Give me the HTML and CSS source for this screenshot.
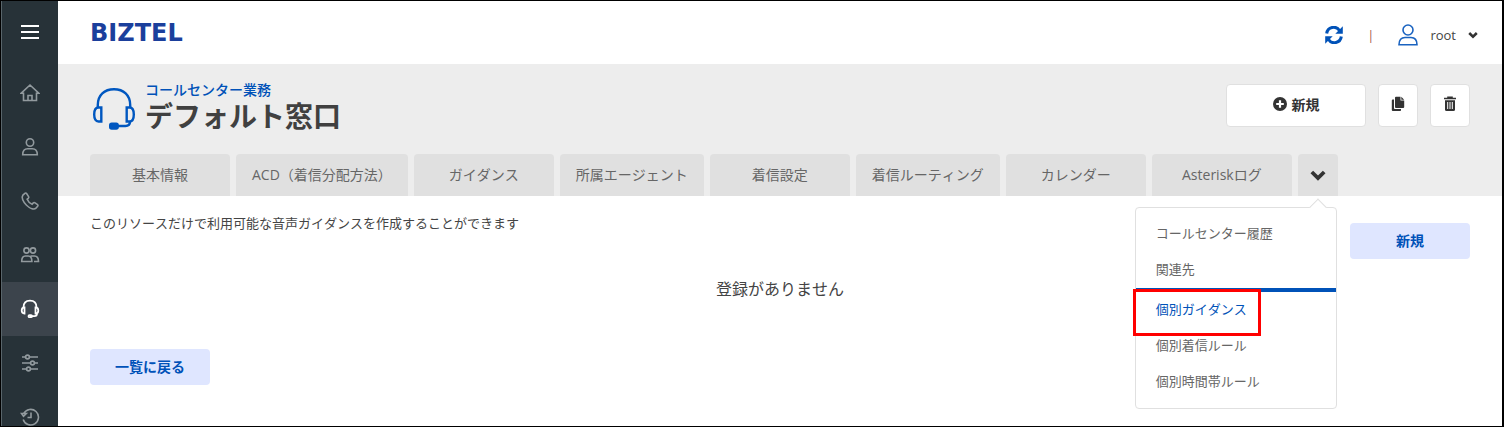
FILE: index.html
```html
<!DOCTYPE html>
<html lang="ja">
<head>
    <meta charset="UTF-8">
    <meta name="viewport" content="width=device-width, initial-scale=1.0">
    <title>BIZTEL コールセンター業務</title>
    <link rel="stylesheet" href="styles.css">
</head>
<body>
<div class="app">

    <!-- サイドバー -->
    <aside class="sidebar">
        <button class="menu-btn" type="button" aria-label="メニュー">
            <svg width="20" height="18" viewBox="0 0 20 18"><path d="M1 2h18M1 8h18M1 14h18" stroke="#fff" stroke-width="2" fill="none"/></svg>
        </button>
        <nav class="side-nav">
            <a href="#home" aria-label="ホーム">
                <svg class="icon" width="20" height="20" viewBox="0 0 20 20"><path d="M1 10.300L10 2l9 8.300h-2.500V17.500h-13v-7.200zM8 17.500v-5h4v5"/></svg>
            </a>
            <a href="#user" aria-label="ユーザー">
                <svg class="icon" width="20" height="20" viewBox="0 0 20 20"><circle cx="10" cy="5.500" r="3.700"/><path d="M2.700 17.700c0-4 1.800-6 5-6h4.600c3.200 0 5 2 5 6z"/></svg>
            </a>
            <a href="#phone" aria-label="電話">
                <svg class="icon" width="20" height="20" viewBox="0 0 20 20"><path d="M5.200 2.200L2.900 4.100C1 6.500 3.200 11 6.300 14c3.200 3.100 7.400 5 9.700 3.200l1.800-2.100c.4-.6.300-1-.2-1.400l-2.900-2c-.5-.3-1-.3-1.400.2l-1.200 1.300c-1.900-.7-4.200-3-5-4.900l1.300-1.200c.4-.4.5-.9.200-1.400L6.600 2.500c-.4-.5-.9-.6-1.400-.3z"/></svg>
            </a>
            <a href="#group" aria-label="グループ">
                <svg class="icon" width="20" height="20" viewBox="0 0 20 20"><circle cx="6.500" cy="5.500" r="2.600"/><circle cx="13" cy="5.500" r="2.600"/><path d="M1.700 16.500c0-3.600 1.300-5.500 3.700-5.500h2.800c2.400 0 3.700 1.900 3.700 5.500zM10.500 11h3.900c2.600 0 4.100 1.900 4.100 5.500h-4.500"/></svg>
            </a>
            <a href="#callcenter" class="active" aria-label="コールセンター">
                <svg class="icon" width="20" height="20" viewBox="0 0 20 20"><path d="M3.500 8.500C3.500 4 6.300 1.700 10 1.700s6.500 2.300 6.500 6.800M17 14.500c0 2-1 2.700-2.500 2.700H10"/><path d="M4.500 8.300v6.200c-2 0-2.800-1.200-2.800-3.100s.8-3.100 2.800-3.100zM15.500 8.300v6.200c2 0 2.800-1.200 2.800-3.100s-.8-3.100-2.800-3.100z"/><rect x="8.500" y="16.200" width="3.500" height="2" rx="1"/></svg>
            </a>
            <a href="#settings" aria-label="設定">
                <svg class="icon" width="20" height="20" viewBox="0 0 20 20"><path d="M2 4h3.500M9.500 4H18M2 10h8.500M14.500 10H18M2 16h4.500M10.500 16H18"/><circle cx="7.500" cy="4" r="1.900"/><circle cx="12.500" cy="10" r="1.900"/><circle cx="8.500" cy="16" r="1.900"/></svg>
            </a>
            <a href="#history" aria-label="履歴">
                <svg class="icon" width="20" height="20" viewBox="0 0 20 20"><path d="M3.800 6.500a7.800 7.800 0 1 1-.6 6M11 5.500v5H7.500"/><path d="M1.500 6.500h4.800L3.500 9.300z"/></svg>
            </a>
        </nav>
    </aside>

    <div class="main">
        <!-- ヘッダー -->
        <header class="topbar">
            <a href="#top" class="logo">BIZTEL</a>
            <div class="topbar-right">
                <button class="plain-btn" type="button" aria-label="更新">
                    <svg width="18" height="18" viewBox="0 0 18 18"><path d="M1.700 7.500A7 7 0 0 1 14.500 4.500M16.300 10.500A7 7 0 0 1 3.500 13.500" fill="none" stroke="#0052b8" stroke-width="3"/><path d="M17.800.3v7.500h-7.500zM.2 17.700v-7.500h7.500z" fill="#0052b8"/></svg>
                </button>
                <span class="separator">|</span>
                <button class="plain-btn user-btn" type="button">
                    <svg width="20" height="22" viewBox="0 0 20 22" fill="none" stroke="#1a63c0" stroke-width="1.600"><circle cx="10" cy="6" r="5"/><path d="M1 20.800c0-5 2.300-7.300 6-7.300h6c3.700 0 6 2.300 6 7.300z"/></svg>
                    <span>root</span>
                    <svg width="10" height="8" viewBox="0 0 10 8"><path d="M1.200 2L5 5.600 8.800 2" fill="none" stroke="#333" stroke-width="2.600"/></svg>
                </button>
            </div>
        </header>

        <!-- ページタイトルとタブ -->
        <section class="page-head">
            <div class="title-row">
                <svg class="title-icon" width="44" height="44" viewBox="0 0 44 44" fill="none" stroke="#0057c0" stroke-width="2.400"><path d="M5.800 20.500V18C5.800 8 12.500 2.200 22 2.200S38.200 8 38.200 18v2.500"/><path d="M9.300 20.500v14H6.500c-2.800 0-4.300-2.500-4.300-7s1.500-7 4.300-7zM34.700 20.500v14h2.800c2.800 0 4.300-2.500 4.300-7s-1.500-7-4.300-7z"/><path d="M38 34.500c0 3-1.500 4.500-4.500 4.500H24"/><rect x="18.200" y="36.700" width="7.500" height="4.800" rx="1.500" fill="#0057c0"/></svg>
                <div class="title-text">
                    <p class="category">コールセンター業務</p>
                    <h1>デフォルト窓口</h1>
                </div>
                <div class="actions">
                    <button class="action-btn wide" type="button">
                        <svg width="14" height="14" viewBox="0 0 14 14"><circle cx="7" cy="7" r="7" fill="#333"/><path d="M7 3.200v7.600M3.200 7h7.600" stroke="#fff" stroke-width="2.200"/></svg>
                        <span>新規</span>
                    </button>
                    <button class="action-btn" type="button" aria-label="コピー">
                        <svg width="14" height="16" viewBox="0 0 14 16" fill="#333"><path d="M5 .8h4.500v3.700h3.700V11a1 1 0 0 1-1 1H5a1 1 0 0 1-1-1V1.800a1 1 0 0 1 1-1zM10.300.8l2.900 2.900h-2.900zM1.800 3.500H3v8.700a.8.800 0 0 0 .8.800H10v1.200a.8.800 0 0 1-.8.800H1.800a1 1 0 0 1-1-1V4.500a1 1 0 0 1 1-1z"/></svg>
                    </button>
                    <button class="action-btn" type="button" aria-label="削除">
                        <svg width="14" height="16" viewBox="0 0 14 16"><path d="M1 2.500h12M5 2V1.200h4V2" fill="none" stroke="#333" stroke-width="1.600"/><path d="M2 4.200h10v9.300a1.500 1.500 0 0 1-1.500 1.500h-7A1.500 1.500 0 0 1 2 13.500z" fill="#333"/><path d="M4.700 6v7M7 6v7M9.300 6v7" stroke="#fff" stroke-width="1"/></svg>
                    </button>
                </div>
            </div>

            <nav class="tabs">
                <a href="#basic" class="tab">基本情報</a>
                <a href="#acd" class="tab">ACD（着信分配方法）</a>
                <a href="#guidance" class="tab">ガイダンス</a>
                <a href="#agents" class="tab">所属エージェント</a>
                <a href="#incoming" class="tab">着信設定</a>
                <a href="#routing" class="tab">着信ルーティング</a>
                <a href="#calendar" class="tab">カレンダー</a>
                <a href="#asterisk" class="tab">Asteriskログ</a>
                <div class="more">
                    <button class="more-btn" type="button" aria-label="その他">
                        <svg width="16" height="12" viewBox="0 0 16 12"><path d="M1.800 3L8 9l6.200-6" fill="none" stroke="#333" stroke-width="3.800"/></svg>
                    </button>
                    <!-- ドロップダウン -->
                    <div class="dropdown">
                        <a href="#cc-history">コールセンター履歴</a>
                        <a href="#related">関連先</a>
                        <a href="#own-guidance" class="current">個別ガイダンス</a>
                        <a href="#own-rule">個別着信ルール</a>
                        <a href="#own-time">個別時間帯ルール</a>
                    </div>
                </div>
            </nav>
        </section>

        <!-- コンテンツ -->
        <main class="content">
            <div class="content-top">
                <p class="description">このリソースだけで利用可能な音声ガイダンスを作成することができます</p>
                <button class="blue-btn" type="button">新規</button>
            </div>
            <p class="empty">登録がありません</p>
            <button class="blue-btn" type="button">一覧に戻る</button>
        </main>
    </div>
</div>
</body>
</html>
```
FILE: styles.css
```css
*,
*::before,
*::after {
    box-sizing: border-box;
}

body {
    margin: 0;
    font-family: "Open Sans", "Noto Sans CJK JP", sans-serif;
    font-size: 13px;
    font-kerning: none;
    line-height: 20px;
    color: #444;
    background-color: #fff;
}

p,
h1 {
    margin: 0;
}

a {
    text-decoration: none;
}

button {
    padding: 0;
    font-family: inherit;
    border: none;
    cursor: pointer;
}

svg {
    display: block;
    flex-shrink: 0;
}

/* 全体の枠 */
.app {
    display: flex;
    height: 100vh;
    border: 1px solid #000;
    border-width: 1px 2px 1px 1px;
    overflow: hidden;
}

/* サイドバー */
.sidebar {
    width: 57px;
    flex-shrink: 0;
    background-color: #273238;
    border-left: 1px solid #59656b;
}

.menu-btn {
    display: flex;
    justify-content: center;
    align-items: center;
    width: 100%;
    height: 65px;
    padding-bottom: 2px;
    background: none;
}

.side-nav a {
    display: flex;
    justify-content: center;
    align-items: center;
    height: 54px;
}

.side-nav .active {
    background-color: #3c444c;
}

.icon {
    fill: none;
    stroke: #929a9e;
    stroke-width: 1.6;
}

.active .icon {
    stroke: #fff;
    stroke-width: 1.8;
}

.main {
    flex: 1;
    min-width: 0;
}

/* ヘッダー */
.topbar {
    display: flex;
    justify-content: space-between;
    align-items: center;
    height: 63px;
    padding: 0 24px 0 32px;
}

.logo {
    font-family: "DejaVu Sans", sans-serif;
    font-size: 24px;
    font-weight: bold;
    color: #1b3f9c;
}

.topbar-right {
    display: flex;
    align-items: center;
    gap: 24px;
    padding-top: 4px;
}

.plain-btn {
    background: none;
}

.separator {
    color: #a8604c;
}

.user-btn {
    display: flex;
    align-items: center;
    gap: 12px;
    font-size: 13px;
    color: #444;
}

/* タイトル */
.page-head {
    padding: 16px 32px 0;
    background-color: #ededed;
}

.title-row {
    display: flex;
    align-items: flex-start;
    gap: 9px;
    height: 74px;
}

.title-icon {
    margin: 7px 0 0 2px;
}

.category {
    font-size: 14px;
    font-weight: 500;
    color: #0052b8;
}

h1 {
    font-size: 28px;
    font-weight: bold;
    line-height: 32px;
    color: #404040;
}

.actions {
    display: flex;
    gap: 12px;
    margin: 4px 0 0 auto;
}

.action-btn {
    display: flex;
    justify-content: center;
    align-items: center;
    gap: 5px;
    width: 40px;
    height: 43px;
    padding-bottom: 3px;
    font-size: 14px;
    font-weight: bold;
    color: #333;
    background-color: #fff;
    border: 1px solid #e0e0e0;
    border-radius: 4px;
}

.action-btn.wide {
    width: 140px;
}

/* タブ */
.tabs {
    display: flex;
    gap: 6px;
}

.tab {
    min-width: 140px;
    padding: 0 16px;
    font-size: 14px;
    line-height: 42px;
    text-align: center;
    white-space: nowrap;
    color: #666;
    background-color: #e0e0e0;
    border-radius: 4px 4px 0 0;
}

.more {
    position: relative;
}

.more-btn {
    display: flex;
    justify-content: center;
    align-items: center;
    width: 40px;
    height: 42px;
    background-color: #e0e0e0;
    border-radius: 4px 4px 0 0;
}

/* ドロップダウンメニュー */
.dropdown {
    position: absolute;
    top: 53px;
    right: 1px;
    width: 202px;
    padding: 8px 0;
    background-color: #fff;
    border: 1px solid #e0e0e0;
    border-radius: 4px;
}

.dropdown::before {
    content: "";
    position: absolute;
    top: -7px;
    right: 12px;
    width: 12px;
    height: 12px;
    background-color: #fff;
    border: 1px solid #e0e0e0;
    border-width: 1px 0 0 1px;
    transform: rotate(45deg);
}

.dropdown a {
    display: block;
    padding: 0 20px 2px;
    line-height: 34px;
    color: #666;
}

.dropdown .current {
    position: relative;
    color: #0052b8;
    border-top: 4px solid #0052b8;
}

/* 選択項目の赤枠 */
.dropdown .current::after {
    content: "";
    position: absolute;
    top: -3px;
    left: -3px;
    width: 128px;
    height: 47px;
    border: 3px solid #f00;
}

/* コンテンツ */
.content {
    padding: 17px 32px 0;
}

.content-top {
    display: flex;
    justify-content: space-between;
    align-items: flex-start;
}

.content-top .blue-btn {
    margin-top: 10px;
}

.blue-btn {
    width: 120px;
    height: 36px;
    padding-bottom: 3px;
    font-size: 14px;
    font-weight: bold;
    color: #0052b8;
    background-color: #dfe6ff;
    border-radius: 4px;
}

.empty {
    padding: 20px 0 50px;
    font-size: 16px;
    text-align: center;
}
```
